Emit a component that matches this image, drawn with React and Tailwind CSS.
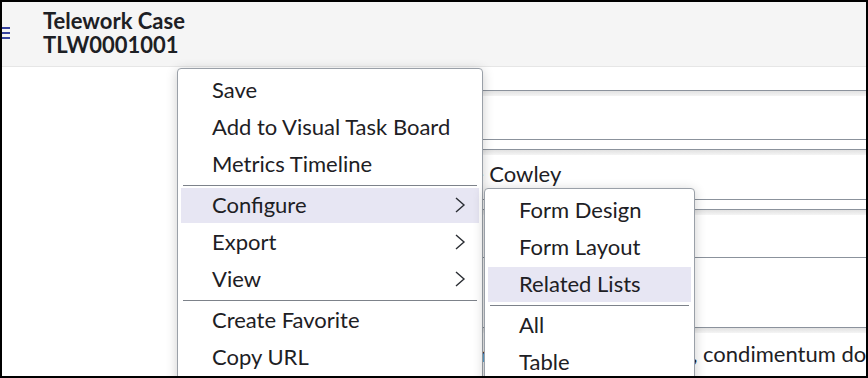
import React from 'react';

const Chevron = () => (
  <svg width="12" height="18" viewBox="0 0 12 18" className="text-[#2a2d33]">
    <polyline points="2,2 10,9 2,16" fill="none" stroke="currentColor" strokeWidth="1.4" />
  </svg>
);

const Item = ({ label, active, sub }) => (
  <div className="h-[37px] py-px px-[3px]">
    <div className={`h-full flex items-center justify-between pl-[31px] pr-[13px] leading-[26px] pb-px ${active ? 'bg-[#e7e6f3]' : ''}`}>
      <span>{label}</span>
      {sub && <Chevron />}
    </div>
  </div>
);

const Sep = () => (
  <div className="h-[4px] flex items-center px-[5px]">
    <div className="h-px w-full bg-[#7d828a]" />
  </div>
);

const Field = ({ children, className = '' }) => (
  <div className={`border-y border-[#8b929c] bg-white ${className}`}>
    <div className="h-[5px] bg-gradient-to-b from-[#e2e2e2] to-[#f4f4f4]" />
    {children}
  </div>
);

const App = () => {
  return (
    <div className="w-[868px] h-[378px] border-2 border-black bg-white relative overflow-hidden text-[#1d2024] font-['Lato','Liberation_Sans',sans-serif]">
      {/* HEADER */}
      <header className="h-[65px] bg-[#f5f5f5] border-b border-[#e6e6e6] flex items-center">
        <div className="w-[41px] h-full flex items-center">
          <div className="flex flex-col gap-[3.5px] mt-[-2px]">
            <div className="w-[8px] h-[1.5px] bg-[#36429e]" />
            <div className="w-[8px] h-[1.5px] bg-[#36429e]" />
            <div className="w-[8px] h-[1.5px] bg-[#36429e]" />
          </div>
        </div>
        <div className="font-bold text-[22px] leading-[24px] mt-[-3px]">
          <div>Telework Case</div>
          <div>TLW0001001</div>
        </div>
      </header>

      {/* FORM BODY */}
      <div className="flex">
        <div className="w-[418px] shrink-0" />
        <div className="flex-1 text-[22px]">
          <div className="h-[23px]" />
          <Field className="h-[50px]" />
          <div className="h-[9px]" />
          <Field className="h-[51px]">
            <div className="pl-[20px] leading-[26px] mt-[6px] whitespace-nowrap">Jane Cowley</div>
          </Field>
          <div className="h-[9px]" />
          <Field className="h-[49px]" />
          <div className="h-[69px]" />
          <Field className="h-[80px] border-b-0">
            <div className="pl-[11px] leading-[26px] mt-[8px] whitespace-nowrap">Lorem ipsum dolor sit amet, condimentum dolor sit amet</div>
          </Field>
        </div>
      </div>

      {/* CONTEXT MENU */}
      <div className="absolute left-[175px] top-[66px] w-[306px] bg-white border border-[#9aa0a8] rounded-[4px] shadow-[0_2px_12px_rgba(0,0,0,0.2)] pt-[3px] pb-2 text-[22px]">
        <Item label="Save" />
        <Item label="Add to Visual Task Board" />
        <Item label="Metrics Timeline" />
        <Sep />
        <Item label="Configure" active sub />
        <Item label="Export" sub />
        <Item label="View" sub />
        <Sep />
        <Item label="Create Favorite" />
        <Item label="Copy URL" />
      </div>

      {/* SUBMENU */}
      <div className="absolute left-[482px] top-[186px] w-[211px] bg-white border border-[#9aa0a8] rounded-[4px] shadow-[0_2px_12px_rgba(0,0,0,0.2)] pt-[3px] pb-2 text-[22px]">
        <Item label="Form Design" />
        <Item label="Form Layout" />
        <Item label="Related Lists" active />
        <Sep />
        <Item label="All" />
        <Item label="Table" />
      </div>
    </div>
  );
};

export default App;
